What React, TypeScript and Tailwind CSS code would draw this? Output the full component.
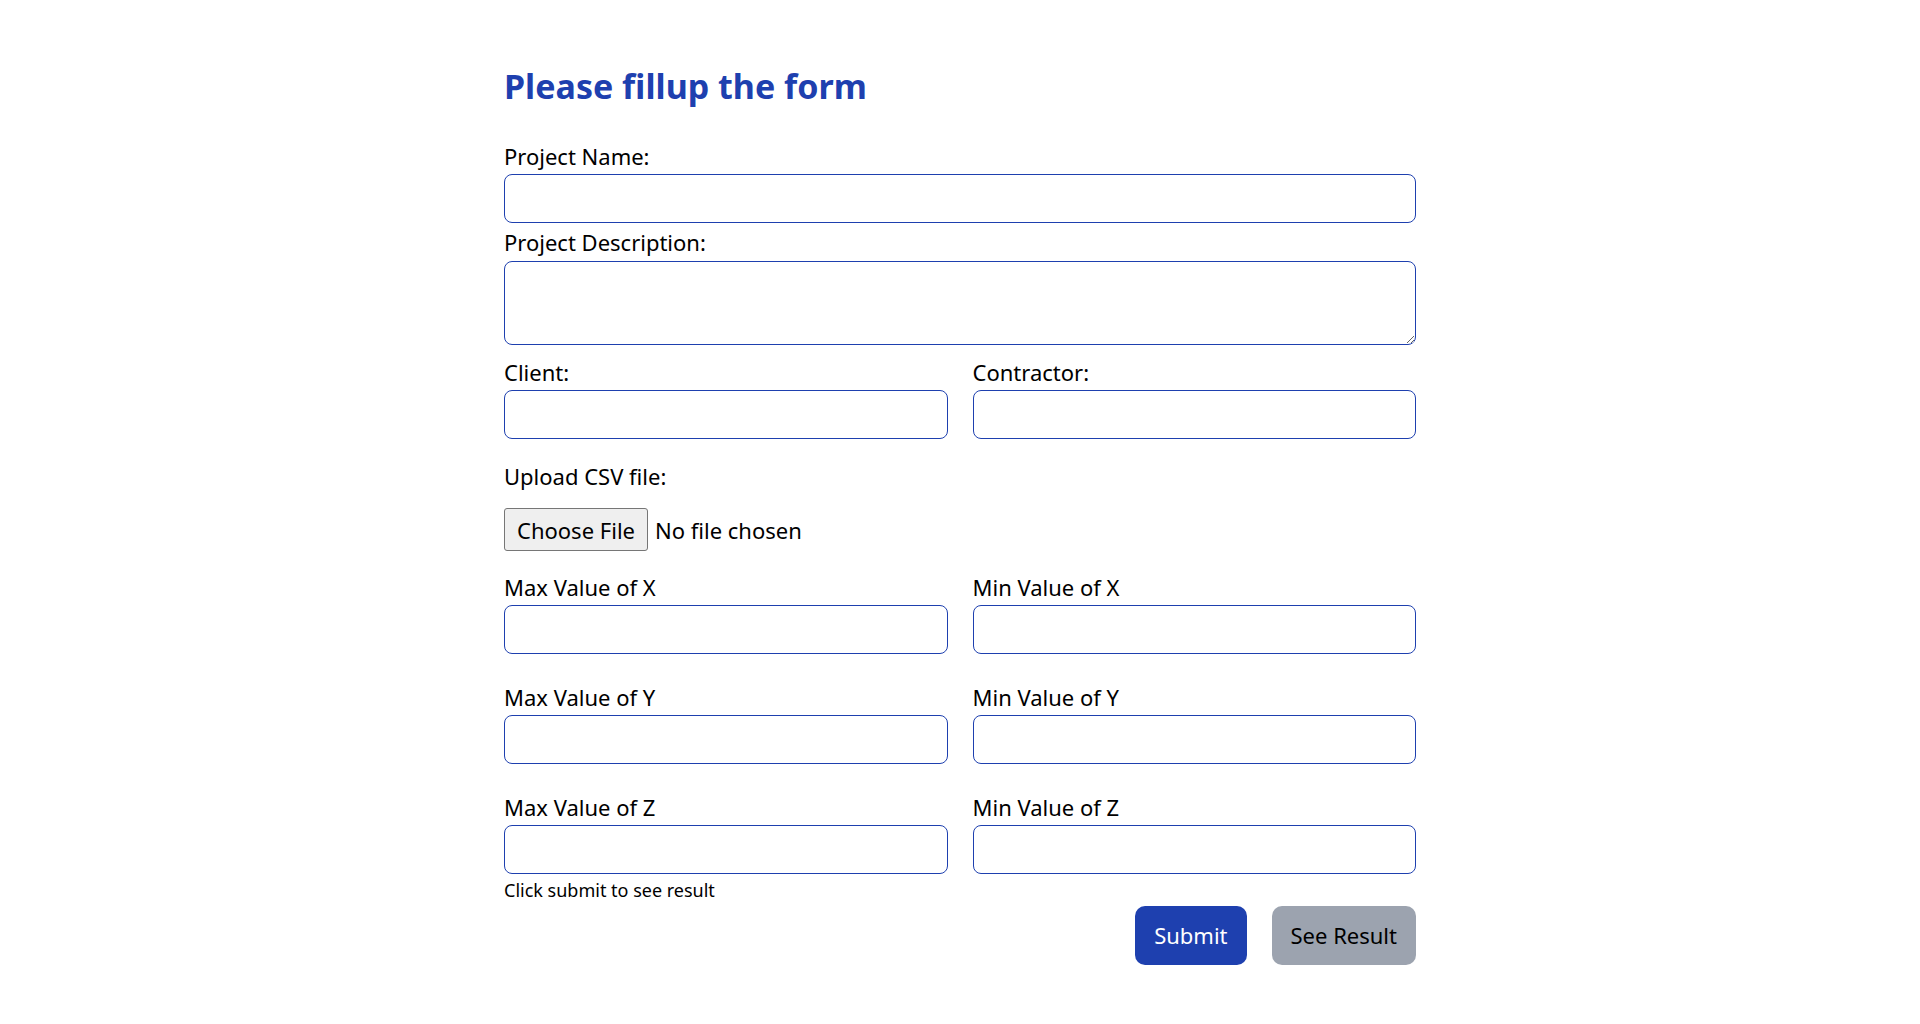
import { useState } from "react";

const inputCls =
  "block w-full h-[49px] rounded-lg border border-[#1e40af] bg-white px-3 text-[22px] outline-none";

function Field({ label, className = "" }: { label: string; className?: string }) {
  return (
    <div className={className}>
      <label className="block leading-[26px] mb-[5px]">{label}</label>
      <input type="text" className={inputCls} />
    </div>
  );
}

export default function App() {
  const [submitted, setSubmitted] = useState(false);

  return (
    <div className="min-h-screen bg-white text-black font-['Noto_Sans',sans-serif] text-[22px]">
      <form
        className="w-[912px] mx-auto pt-[66px]"
        onSubmit={e => {
          e.preventDefault();
          setSubmitted(true);
        }}
      >
        <h1 className="text-[34px] leading-10 font-bold text-[#1e40af] mb-[37px]">Please fillup the form</h1>

        <Field label="Project Name:" />

        <div className="mt-[6px]">
          <label className="block leading-[26px] mb-[6px]">Project Description:</label>
          <textarea className="block w-full h-[84px] rounded-lg border border-[#1e40af] bg-white px-3 py-2 text-[22px] outline-none" />
        </div>

        {/* Client / Contractor */}
        <div className="grid grid-cols-2 gap-x-[25px] mt-[14px]">
          <Field label="Client:" />
          <Field label="Contractor:" />
        </div>

        {/* CSV upload */}
        <div className="mt-[24px]">
          <label className="block leading-[26px]">Upload CSV file:</label>
          <input
            type="file"
            accept=".csv"
            className="block mt-[19px] text-[22px] leading-[28px] file:mr-[7px] file:h-[43px] file:px-[12px] file:border file:border-[#767676] file:rounded-[3px] file:bg-[#efefef] file:text-black"
          />
        </div>

        {/* Min / max */}
        <div className="grid grid-cols-2 gap-x-[25px] gap-y-[30px] mt-[23px]">
          <Field label="Max Value of X" />
          <Field label="Min Value of X" />
          <Field label="Max Value of Y" />
          <Field label="Min Value of Y" />
          <Field label="Max Value of Z" />
          <Field label="Min Value of Z" />
        </div>

        <p className="mt-[4px] text-[18px] leading-6">
          {submitted ? "Submitted — click see result" : "Click submit to see result"}
        </p>

        <div className="flex justify-end gap-[25px] mt-[4px]">
          <button type="submit" className="h-[59px] px-[19px] rounded-[10px] bg-[#1e40af] text-white text-[22px]">
            Submit
          </button>
          <button type="button" className="h-[59px] px-[19px] rounded-[10px] bg-[#9ca3af] text-black text-[22px]">
            See Result
          </button>
        </div>
      </form>
    </div>
  );
}
